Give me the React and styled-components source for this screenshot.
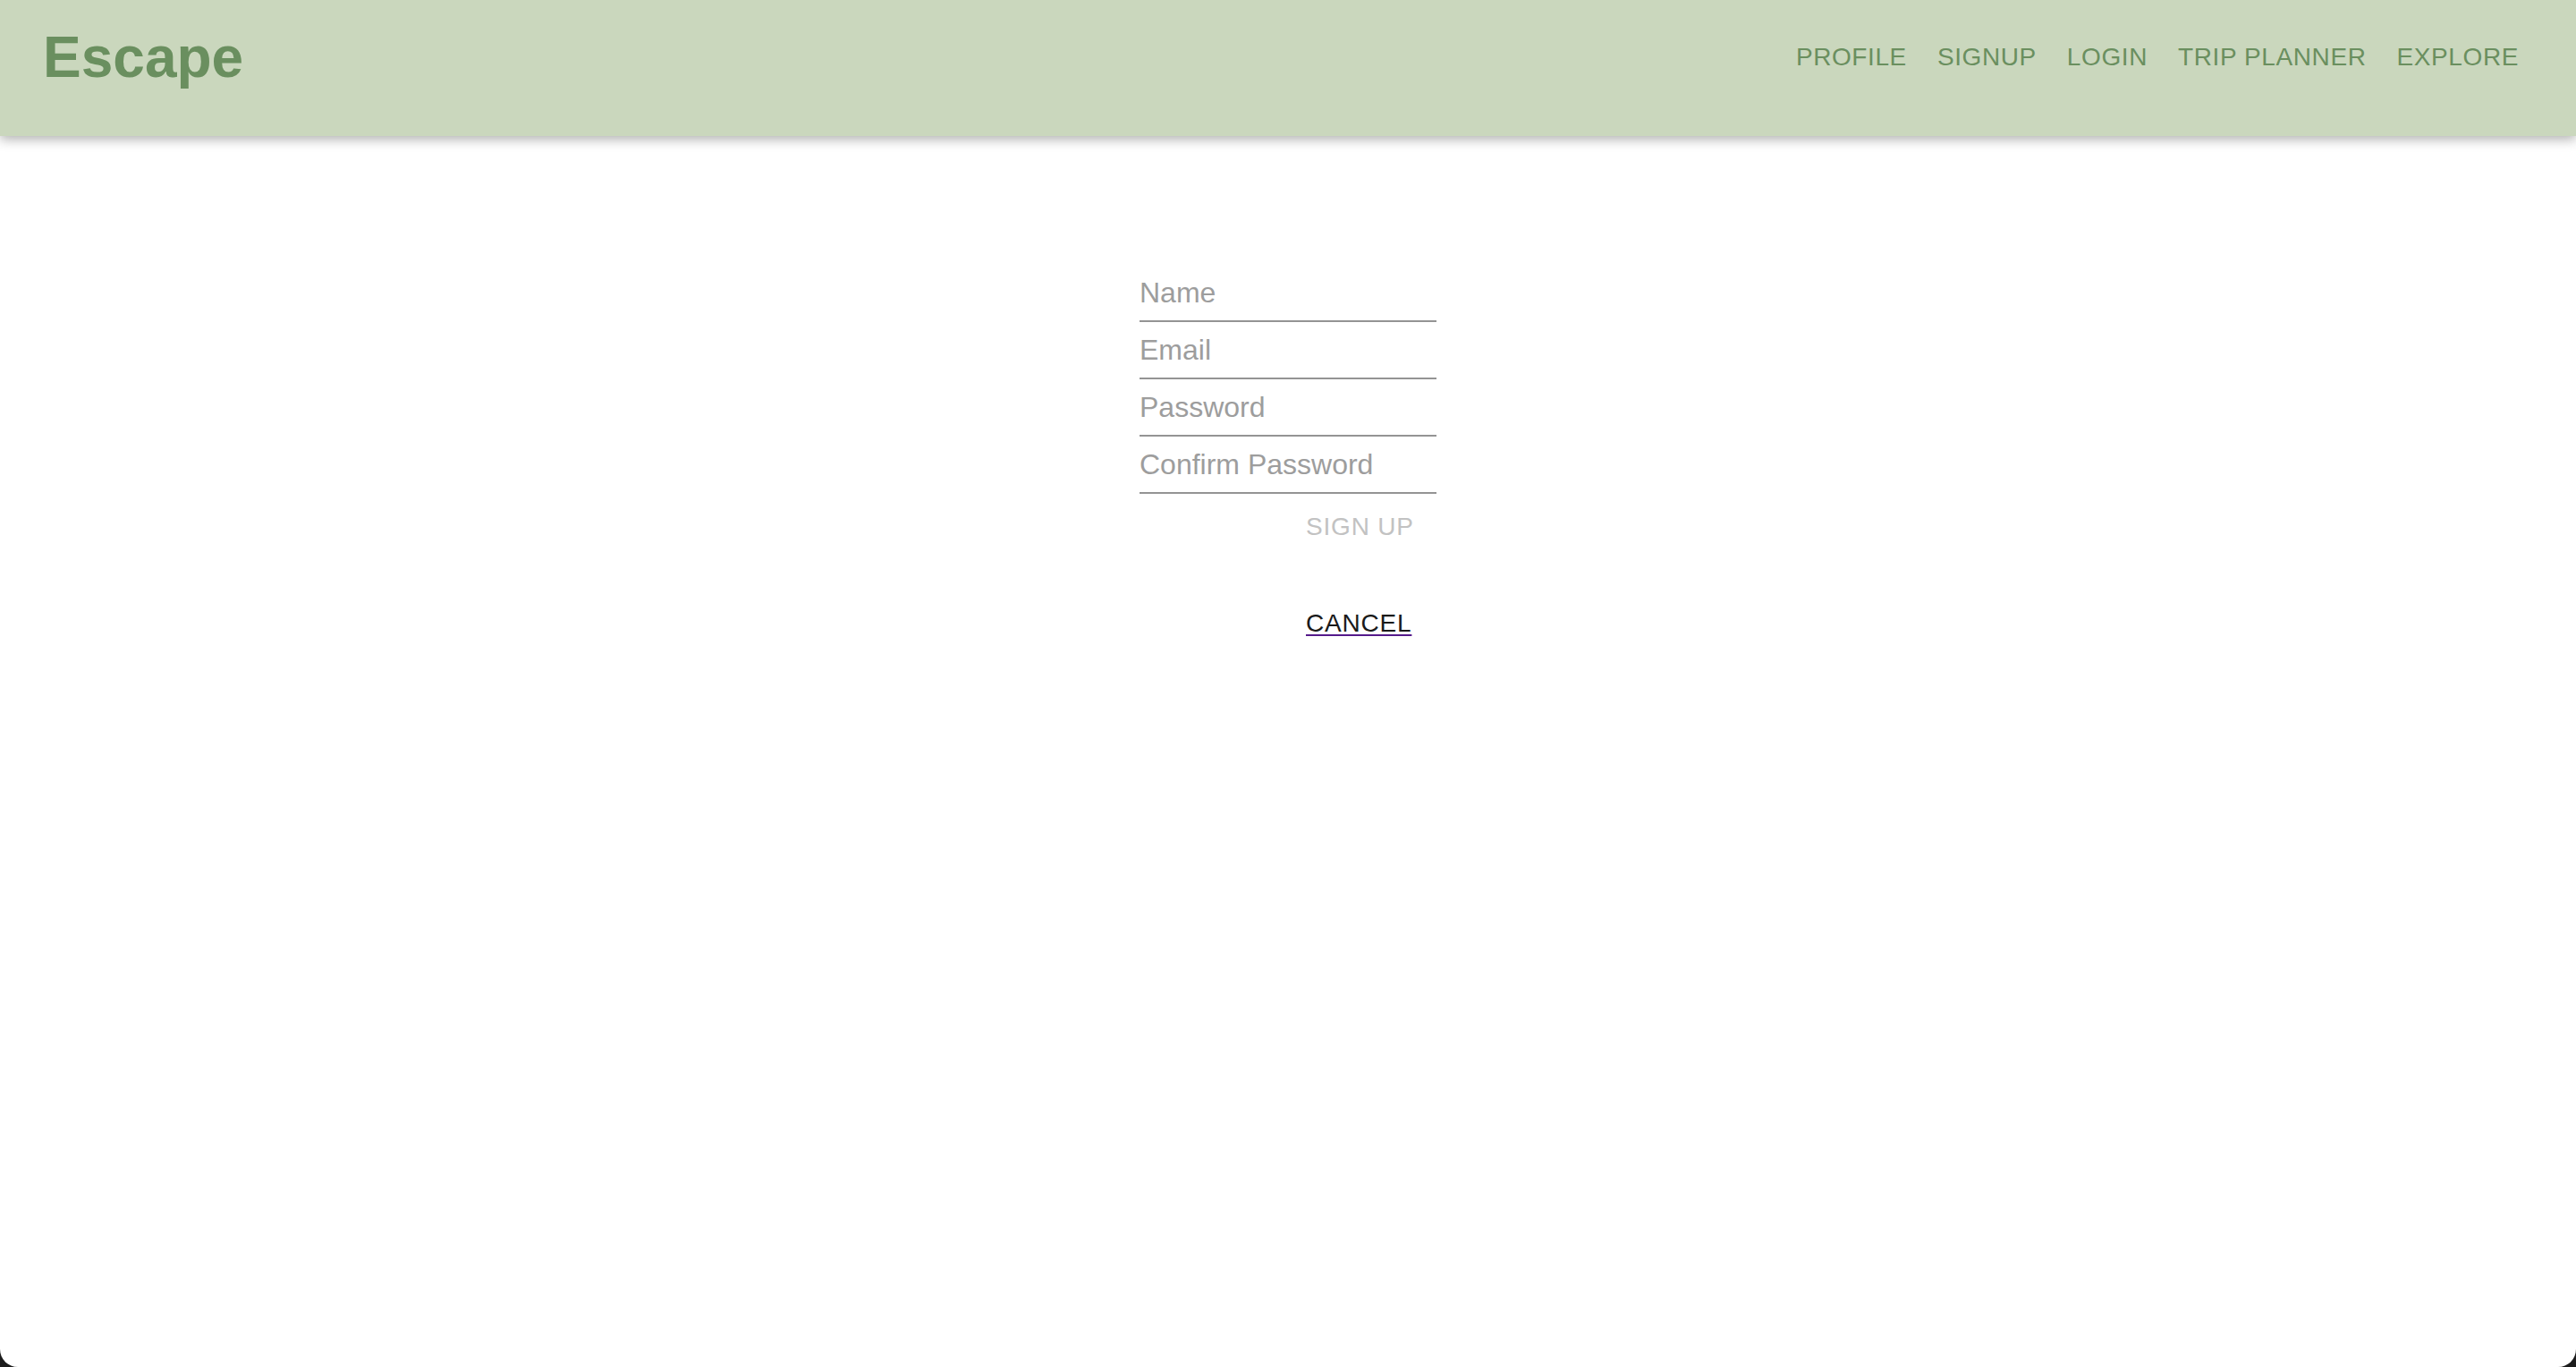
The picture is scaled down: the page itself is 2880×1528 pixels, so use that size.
import React from "react";
import styled, { createGlobalStyle } from "styled-components";

const GLOBAL = createGlobalStyle`
  html, body {
    margin: 0;
    padding: 0;
    background-color: #1c1c1c;
  }
  * {
    box-sizing: border-box;
  }
`;

const PAGE = styled.div`
  display: flex;
  flex-direction: column;
  height: 1528px;
  background-color: #ffffff;
  border-radius: 0 0 20px 20px;
  overflow: hidden;
  font-family: "Liberation Sans", Arial, sans-serif;
`;

const HEADER = styled.header`
  position: relative;
  z-index: 1;
  height: 152px;
  flex-shrink: 0;
  background-color: #cad7bd;
  box-shadow: 0 4px 12px rgba(0, 0, 0, 0.3);
`;

const TOOLBAR = styled.div`
  display: flex;
  align-items: center;
  justify-content: space-between;
  height: 128px;
  padding: 0 47px 0 48px;
`;

const LOGO = styled.div`
  font-size: 64px;
  font-weight: bold;
  color: #6a8f5f;
`;

const NAV = styled.nav`
  display: flex;
  align-items: center;
`;

const NAV_LINK = styled.a`
  padding: 0 17px;
  font-size: 28px;
  letter-spacing: 0.6px;
  color: #6a8f5f;
  text-transform: uppercase;
  cursor: pointer;
`;

const MAIN = styled.main`
  display: flex;
  justify-content: center;
  padding-top: 144px;
`;

const FORM = styled.form`
  display: flex;
  flex-direction: column;
  width: 332px;
`;

const FIELD = styled.input`
  height: 64px;
  width: 100%;
  padding: 12px 0;
  border: none;
  border-bottom: 2px solid #949494;
  outline: none;
  background: transparent;
  font-family: "Liberation Sans", Arial, sans-serif;
  font-size: 32px;
  line-height: 38px;
  color: #222;
  &::placeholder {
    color: #9d9d9d;
  }
`;

const ACTIONS = styled.div`
  display: flex;
  flex-direction: column;
  align-items: flex-start;
  padding-left: 170px;
`;

const BUTTON = styled.button`
  padding: 12px 16px;
  border: none;
  background: transparent;
  font-family: "Liberation Sans", Arial, sans-serif;
  font-size: 28px;
  line-height: 49px;
  letter-spacing: 0.8px;
  text-transform: uppercase;
  color: ${(props) => (props.disabled ? "#c2c2c2" : "#1a1a1a")};
`;

const CANCEL_LINK = styled.a`
  margin-top: 35px;
  padding: 12px 16px;
  font-size: 28px;
  line-height: 49px;
  letter-spacing: 0.8px;
  color: #1a1a1a;
  text-decoration: underline;
  text-decoration-color: #551a8b;
  text-decoration-thickness: 2px;
  text-underline-offset: 3px;
  cursor: pointer;
`;

const LINKS = ["Profile", "Signup", "Login", "Trip Planner", "Explore"];

function App() {
  return (
    <PAGE>
      <GLOBAL />
      <HEADER>
        <TOOLBAR>
          <LOGO>Escape</LOGO>
          <NAV>
            {LINKS.map((link) => (
              <NAV_LINK key={link}>{link}</NAV_LINK>
            ))}
          </NAV>
        </TOOLBAR>
      </HEADER>
      <MAIN>
        <FORM onSubmit={(e) => e.preventDefault()}>
          <FIELD type="text" placeholder="Name" />
          <FIELD type="email" placeholder="Email" />
          <FIELD type="password" placeholder="Password" />
          <FIELD type="password" placeholder="Confirm Password" />
          <ACTIONS>
            <BUTTON type="submit" disabled>
              Sign Up
            </BUTTON>
            <CANCEL_LINK>CANCEL</CANCEL_LINK>
          </ACTIONS>
        </FORM>
      </MAIN>
    </PAGE>
  );
}

export default App;
